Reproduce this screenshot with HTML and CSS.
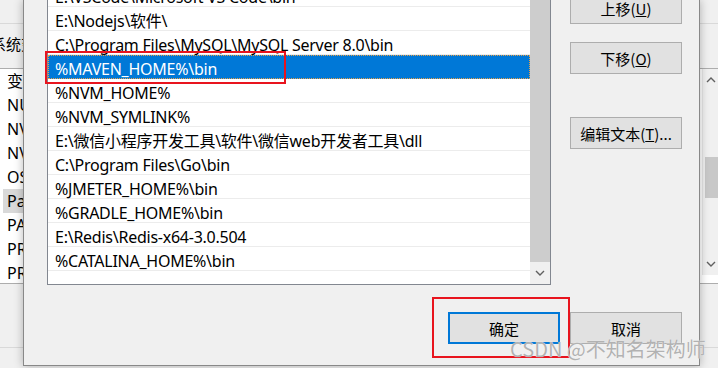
FILE: index.html
```html
<!DOCTYPE html>
<html lang="zh-CN">
<head>
    <meta charset="UTF-8">
    <meta name="viewport" content="width=device-width, initial-scale=1.0">
    <title>编辑环境变量</title>
    <link rel="stylesheet" href="styles.css">
</head>
<body>
    <!-- 后面的"环境变量"窗口，只露出左右两条 -->
    <div class="backwin">
        <div class="bw-top"></div>
        <div class="bw-label"><span>系统变量</span></div>
        <div class="bw-list">
            <div class="bw-rows">
                <div class="bw-row">变量</div>
                <div class="bw-row">NU</div>
                <div class="bw-row">NV</div>
                <div class="bw-row">NV</div>
                <div class="bw-row">OS</div>
                <div class="bw-row bw-sel">Pa</div>
                <div class="bw-row">PA</div>
                <div class="bw-row">PR</div>
                <div class="bw-row">PR</div>
            </div>
            <div class="bw-gap"></div>
            <div class="bw-scroll">
                <div class="bw-arrow">
                    <svg width="10" height="6" viewBox="0 0 10 6"><polyline points="1,5 5,1 9,5" fill="none" stroke="#606060" stroke-width="1.4"/></svg>
                </div>
                <div class="bw-track"><div class="bw-thumb"></div></div>
                <div class="bw-arrow">
                    <svg width="10" height="6" viewBox="0 0 10 6"><polyline points="1,1 5,5 9,1" fill="none" stroke="#606060" stroke-width="1.4"/></svg>
                </div>
            </div>
        </div>
        <div class="bw-foot"></div>
    </div>

    <!-- 编辑环境变量对话框 -->
    <div class="dialog">
        <div class="dlg-main">
            <div class="pathlist">
                <div class="path-rows">
                    <div class="path-row">E:\VSCode\Microsoft VS Code\bin</div>
                    <div class="path-row">E:\Nodejs\软件\</div>
                    <div class="path-row">C:\Program Files\MySQL\MySQL Server 8.0\bin</div>
                    <div class="path-row selected">%MAVEN_HOME%\bin</div>
                    <div class="path-row">%NVM_HOME%</div>
                    <div class="path-row">%NVM_SYMLINK%</div>
                    <div class="path-row">E:\微信小程序开发工具\软件\微信web开发者工具\dll</div>
                    <div class="path-row">C:\Program Files\Go\bin</div>
                    <div class="path-row">%JMETER_HOME%\bin</div>
                    <div class="path-row">%GRADLE_HOME%\bin</div>
                    <div class="path-row">E:\Redis\Redis-x64-3.0.504</div>
                    <div class="path-row">%CATALINA_HOME%\bin</div>
                </div>
                <div class="vscroll">
                    <div class="vthumb"></div>
                    <div class="varrow">
                        <svg width="10" height="6" viewBox="0 0 10 6"><polyline points="1,1 5,5 9,1" fill="none" stroke="#606060" stroke-width="1.4"/></svg>
                    </div>
                </div>
            </div>
            <div class="side-btns">
                <button class="btn">上移(<u>U</u>)</button>
                <button class="btn">下移(<u>O</u>)</button>
                <button class="btn btn-edit">编辑文本(<u>T</u>)...</button>
            </div>
        </div>
        <div class="dlg-foot">
            <button class="btn btn-ok">确定</button>
            <button class="btn">取消</button>
        </div>

        <!-- 红框标注 -->
        <div class="mark mark-row"></div>
        <div class="mark mark-ok"></div>
    </div>

    <div class="watermark">CSDN @不知名架构师</div>
</body>
</html>
```

FILE: styles.css
```css
body {
    margin: 0;
    padding: 0;
    width: 718px;
    height: 368px;
    overflow: hidden;
    position: relative;
    background: #f0f0f0;
    font-family: 'Noto Sans', 'Noto Sans CJK SC', sans-serif;
    font-size: 16px;
    color: #000;
}

/* ---------- back window ---------- */

.backwin {
    display: flex;
    flex-direction: column;
    height: 368px;
}

.bw-top {
    height: 23px;
    border-bottom: 1px solid #d9d9d9;
}

.bw-label {
    width: 23px;
    height: 44px;
    overflow: hidden;
    line-height: 40px;
    font-family: 'Noto Sans CJK SC', sans-serif;
    font-size: 15px;
    white-space: nowrap;
}

.bw-label span {
    margin-left: -9px;
}

.bw-list {
    box-sizing: border-box;
    height: 216px;
    display: flex;
    background: #fff;
    border-top: 1px solid #adadad;
    border-bottom: 1px solid #adadad;
}

/* only the strip left of the dialog shows */
.bw-rows {
    width: 23px;
    overflow: hidden;
}

.bw-gap {
    flex: 1;
}

.bw-row {
    height: 24px;
    line-height: 24px;
    margin-left: 3px;
    padding-left: 4px;
    white-space: nowrap;
}

.bw-sel {
    background: #d9d9d9;
}

.bw-scroll {
    width: 15px;
    height: 206px;
    display: flex;
    flex-direction: column;
    background: #f0f0f0;
    border-left: 1px solid #e6e6e6;
}

.bw-arrow {
    height: 22px;
    display: flex;
    align-items: center;
    justify-content: center;
}

.bw-track {
    flex: 1;
}

.bw-thumb {
    margin: 66px 0 0 2px;
    height: 41px;
    background: #c8c8c8;
}

.bw-foot {
    height: 63px;
    border-bottom: 1px solid #d9d9d9;
}

/* ---------- dialog ---------- */

.dialog {
    position: absolute;
    left: 23px;
    top: 0;
    box-sizing: border-box;
    width: 677px;
    height: 366px;
    background: #f0f0f0;
    border: 1px solid #888;
    border-top: none;
    box-shadow: 0 0 9px rgba(0, 0, 0, 0.28);
}

.dlg-main {
    display: flex;
    align-items: flex-start;
}

.pathlist {
    box-sizing: border-box;
    width: 504px;
    height: 285px;
    margin-left: 23px;
    display: flex;
    background: #fff;
    border: 1px solid #828790;
    border-top: none;
    overflow: hidden;
}

.path-rows {
    flex: 1;
    margin-top: -17px;
}

.path-row {
    box-sizing: border-box;
    height: 24px;
    padding: 4px 0 0 7px;
    line-height: 20px;
    letter-spacing: -0.25px;
    white-space: nowrap;
    border-bottom: 1px solid #ececec;
}

.path-row.selected {
    background: #0078d7;
    color: #fff;
    border-bottom-color: #0078d7;
    outline: 1px dotted #e8a048;
    outline-offset: -1px;
}

.vscroll {
    width: 20px;
    display: flex;
    flex-direction: column;
}

.vthumb {
    flex: 1;
    background: #cdcdcd;
}

.varrow {
    height: 22px;
    display: flex;
    align-items: center;
    justify-content: center;
    background: #f0f0f0;
}

.side-btns {
    width: 112px;
    margin: -8px 0 0 19px;
    display: flex;
    flex-direction: column;
    gap: 18px;
}

.btn {
    box-sizing: border-box;
    width: 112px;
    height: 32px;
    padding: 0;
    background: #e1e1e1;
    border: 1px solid #adadad;
    border-radius: 0;
    font-family: 'Noto Sans CJK SC', sans-serif;
    font-size: 15px;
    color: #000;
}

.btn-edit {
    margin-top: 25px;
}

.btn-ok {
    border: 2px solid #0078d7;
}

.dlg-foot {
    display: flex;
    justify-content: flex-end;
    gap: 10px;
    margin-top: 27px;
    padding-right: 17px;
}

.mark {
    position: absolute;
    box-sizing: border-box;
    border: 2px solid #e8141e;
}

.mark-row {
    left: 21px;
    top: 51px;
    width: 241px;
    height: 33px;
}

.mark-ok {
    left: 408px;
    top: 297px;
    width: 138px;
    height: 61px;
}

.watermark {
    position: absolute;
    left: 510px;
    top: 337px;
    font-family: 'Noto Sans CJK SC', sans-serif;
    font-size: 20px;
    line-height: 24px;
    color: #b2b2b2;
    text-shadow: 0 0 1px #fff;
    white-space: nowrap;
}
```
